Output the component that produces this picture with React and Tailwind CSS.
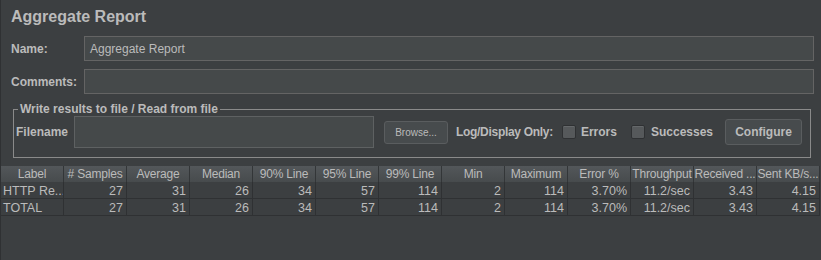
import React from "react";

const cols = ["Label", "# Samples", "Average", "Median", "90% Line", "95% Line", "99% Line", "Min", "Maximum", "Error %", "Throughput", "Received ...", "Sent KB/s..."];
const rows = [
  ["HTTP Re...", "27", "31", "26", "34", "57", "114", "2", "114", "3.70%", "11.2/sec", "3.43", "4.15"],
  ["TOTAL", "27", "31", "26", "34", "57", "114", "2", "114", "3.70%", "11.2/sec", "3.43", "4.15"],
];

function Check() {
  return <span className="w-[14px] h-[14px] rounded-[2px] bg-[#56595b] border border-[#2f3133] shadow-[inset_0_1px_0_#65686a]" />;
}

export default function App() {
  return (
    <div className="w-[821px] h-[260px] bg-[#3c3f41] border-l border-[#2f3133] text-[#bbbbbb] font-['Liberation_Sans',sans-serif] flex flex-col overflow-hidden">
      <div className="pl-[10px] pt-[7px] h-[30px] text-[16px] leading-[20px] font-bold">Aggregate Report</div>
      <div className="flex items-center mt-[6px] h-[25px] pr-[7px]">
        <div className="w-[83px] pl-[10px] text-[12px] font-bold">Name:</div>
        <div className="flex-1 h-full bg-[#45494a] border border-[#646464] flex items-center pl-[5px] text-[12px]">Aggregate Report</div>
      </div>
      <div className="flex items-center mt-[8px] h-[25px] pr-[7px]">
        <div className="w-[83px] pl-[10px] text-[12px] font-bold">Comments:</div>
        <div className="flex-1 h-full bg-[#45494a] border border-[#646464]" />
      </div>
      <fieldset className="ml-[12px] mr-[10px] mt-[8px] h-[56px] border border-[#8a8a8a] px-0 flex items-end pb-[2px]">
        <legend className="ml-[4px] px-[2px] text-[12px] font-bold leading-[14px]">Write results to file / Read from file</legend>
        <div className="flex items-center w-full">
          <span className="pl-[2px] w-[60px] text-[12px] font-bold">Filename</span>
          <div className="w-[300px] h-[32px] bg-[#45494a] border border-[#5e6162]" />
          <button className="ml-[10px] w-[64px] h-[23px] rounded-[3px] bg-[#474b4d] border border-[#5a5d5f] text-[10px] text-[#bbbbbb] flex items-center justify-center">Browse...</button>
          <span className="ml-[8px] text-[12px] font-bold tracking-[-0.3px]">Log/Display Only:</span>
          <span className="ml-[9px] flex items-center"><Check /></span>
          <span className="ml-[5px] text-[12px] font-bold">Errors</span>
          <span className="ml-[14px] flex items-center"><Check /></span>
          <span className="ml-[6px] text-[12px] font-bold">Successes</span>
          <button className="ml-[12px] w-[77px] h-[26px] rounded-[3px] bg-[#474b4d] border border-[#5a5d5f] text-[12px] font-bold text-[#bbbbbb] flex items-center justify-center">Configure</button>
        </div>
      </fieldset>
      <div className="mt-[8px] mr-[1px] grid grid-cols-13 text-[12px] leading-[16px]">
        {cols.map((c) => (
          <div key={c} className="h-[16px] bg-gradient-to-b from-[#53575a] to-[#474b4d] border-r border-[#333638] text-center whitespace-nowrap overflow-hidden tracking-[-0.2px]">{c}</div>
        ))}
        {rows.map((r, ri) =>
          r.map((v, i) => (
            <div key={ri + "-" + i} className={"h-[17px] border-r border-b border-[#2f3133] whitespace-nowrap overflow-hidden pt-[1px] text-[12.5px] " + (i === 0 ? "text-left pl-[2px]" : "text-right pr-[3px]")}>{v}</div>
          ))
        )}
      </div>
    </div>
  );
}
